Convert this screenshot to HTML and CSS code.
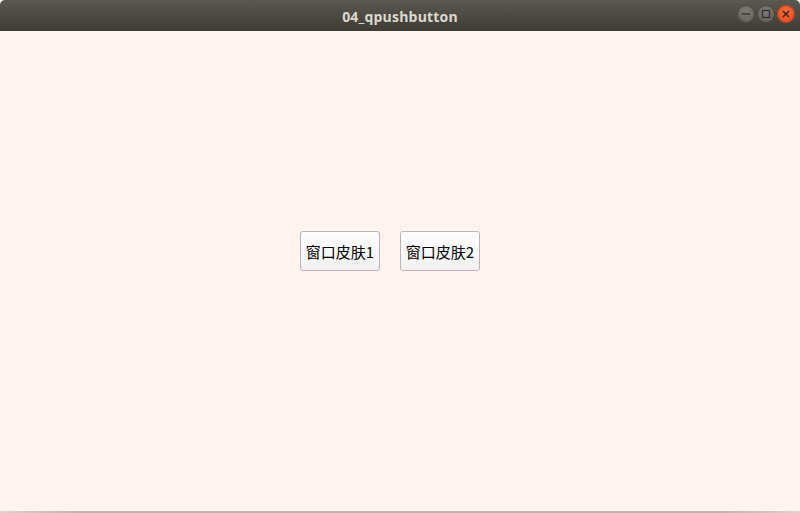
FILE: index.html
```html
<!DOCTYPE html>
<html>
<head>
<meta charset="utf-8">
<link rel="stylesheet" href="styles.css">
</head>
<body>
<div class="window">
  <div class="titlebar">
    <div class="title">04_qpushbutton</div>
    <div class="controls">
      <span class="ctl"><svg width="18" height="18" viewBox="0 0 18 18"><line x1="5" y1="9" x2="13" y2="9" stroke="#2e2d2a" stroke-width="1.2"/></svg></span>
      <span class="ctl"><svg width="18" height="18" viewBox="0 0 18 18"><rect x="5.5" y="5.5" width="7" height="7" fill="none" stroke="#2e2d2a" stroke-width="1.2"/></svg></span>
      <span class="ctl close"><svg width="18" height="18" viewBox="0 0 18 18"><path d="M6 6 L12 12 M12 6 L6 12" stroke="#3a1a10" stroke-width="1.3"/></svg></span>
    </div>
  </div>
  <div class="content">
    <div class="buttons">
      <button class="btn">窗口皮肤1</button>
      <button class="btn">窗口皮肤2</button>
    </div>
  </div>
  <div class="bottom"></div>
</div>
</body>
</html>
```
FILE: styles.css
```css
html, body {
  margin: 0;
  padding: 0;
  width: 800px;
  height: 513px;
  overflow: hidden;
}
.window {
  width: 800px;
  height: 513px;
  display: flex;
  flex-direction: column;
  background: #fff3ef;
}
.titlebar {
  height: 31px;
  flex: none;
  background: linear-gradient(#5b5851, #3f3c37);
  border-radius: 5px 5px 0 0;
  display: flex;
  align-items: center;
  justify-content: center;
  position: relative;
}
.title {
  font-family: "Open Sans", "DejaVu Sans", sans-serif;
  font-weight: 700;
  font-size: 14px;
  color: #dcd8d0;
  letter-spacing: 0.2px;
  margin-top: 1px;
}
.controls {
  position: absolute;
  right: 5px;
  top: 5px;
  display: flex;
  gap: 2px;
}
.ctl {
  width: 18px;
  height: 18px;
  border-radius: 50%;
  background: radial-gradient(circle at 50% 35%, #7c7a74, #5d5b56);
  box-shadow: inset 0 0 0 1px #45433f;
  display: flex;
}
.ctl.close {
  background: radial-gradient(circle at 50% 35%, #f26b3a, #df4b1c);
  box-shadow: inset 0 0 0 1px #b23a14;
}
.content {
  flex: 1;
  padding: 200px 0 0 300px;
}
.buttons {
  display: flex;
  gap: 20px;
}
.btn {
  width: 80px;
  height: 40px;
  padding: 0;
  border: 1px solid #b7b4b1;
  border-radius: 3px;
  background: linear-gradient(#fefefe, #f1f1f1);
  font-family: "Noto Sans CJK SC", sans-serif;
  font-size: 15px;
  color: #000;
}
.bottom {
  height: 2px;
  flex: none;
  background: linear-gradient(90deg, #d6d3d0, #b9b6b3 10%, #b9b6b3 90%, #d6d3d0);
}
```
